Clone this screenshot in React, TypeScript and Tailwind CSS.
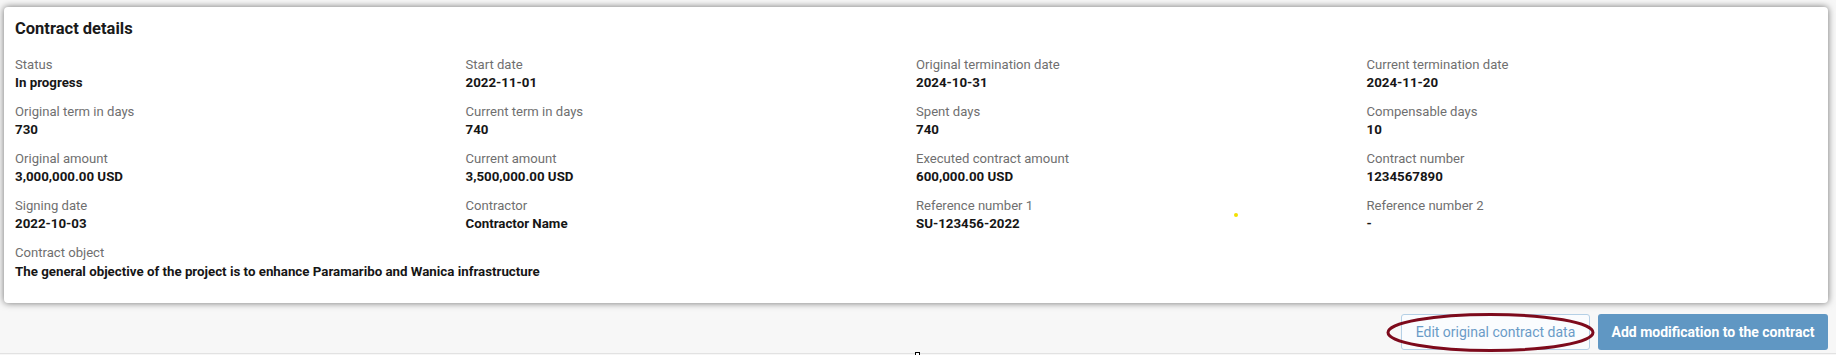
const fields: { label: string; value: string }[] = [
  { label: "Status", value: "In progress" },
  { label: "Start date", value: "2022-11-01" },
  { label: "Original termination date", value: "2024-10-31" },
  { label: "Current termination date", value: "2024-11-20" },
  { label: "Original term in days", value: "730" },
  { label: "Current term in days", value: "740" },
  { label: "Spent days", value: "740" },
  { label: "Compensable days", value: "10" },
  { label: "Original amount", value: "3,000,000.00 USD" },
  { label: "Current amount", value: "3,500,000.00 USD" },
  { label: "Executed contract amount", value: "600,000.00 USD" },
  { label: "Contract number", value: "1234567890" },
  { label: "Signing date", value: "2022-10-03" },
  { label: "Contractor", value: "Contractor Name" },
  { label: "Reference number 1", value: "SU-123456-2022" },
  { label: "Reference number 2", value: "-" },
];

function Field({ label, value, wide }: { label: string; value: string; wide?: boolean }) {
  return (
    <div className={wide ? "col-span-4" : ""}>
      <div className="text-[13.1px] leading-[18px] text-[#6f6f6f]">{label}</div>
      <div className={"text-[13.3px] leading-[18px] font-bold text-[#161616]" + (wide ? " mt-[1px]" : "")}>
        {value}
      </div>
    </div>
  );
}

export default function App() {
  return (
    <div
      className="relative h-[355px] overflow-hidden bg-[#f7f7f7] pt-[7px] pl-[4px] pr-[8px]"
      style={{ fontFamily: "Roboto, 'Liberation Sans', sans-serif" }}
    >
      {/* details card */}
      <div className="h-[296px] rounded-[4px] bg-white px-[11px] pt-[10px] shadow-[0_0_7px_rgba(0,0,0,0.55)]">
        <h2 className="mb-[15px] text-[16.5px] leading-6 font-bold text-[#1a1a1a]">Contract details</h2>
        <div className="grid grid-cols-4 gap-y-[11px]">
          {fields.map((f) => (
            <Field key={f.label} label={f.label} value={f.value} />
          ))}
          <Field
            wide
            label="Contract object"
            value="The general objective of the project is to enhance Paramaribo and Wanica infrastructure"
          />
        </div>
      </div>

      {/* actions */}
      <div className="mt-[11px] flex justify-end gap-[8px]">
        <div className="relative">
          <button className="h-[36px] w-[189px] rounded-[3px] border border-[#b5d0e6] bg-[#fafcfe] text-[14px] text-[#6a9bc7]">
            Edit original contract data
          </button>
          <svg
            className="pointer-events-none absolute left-[-15px] top-[-1px] h-[39px] w-[209px]"
            viewBox="0 0 209 39"
            fill="none"
          >
            <ellipse cx="104.5" cy="19.5" rx="102.5" ry="18" stroke="#7d0a1c" strokeWidth="3" />
          </svg>
        </div>
        <button className="h-[36px] w-[230px] rounded-[3px] bg-[#6097c3] text-[14px] font-bold text-white">
          Add modification to the contract
        </button>
      </div>

      <div className="mt-[3px] -ml-[4px] -mr-[8px] border-t border-[#e2e2e2]" />

      {/* small artifacts from the capture */}
      <div className="absolute left-[1234px] top-[213px] h-[4px] w-[4px] rounded-full bg-[#f2e000]" />
      <div className="absolute left-[915px] top-[352px] h-[4px] w-[5px] border border-black bg-white" />
    </div>
  );
}
